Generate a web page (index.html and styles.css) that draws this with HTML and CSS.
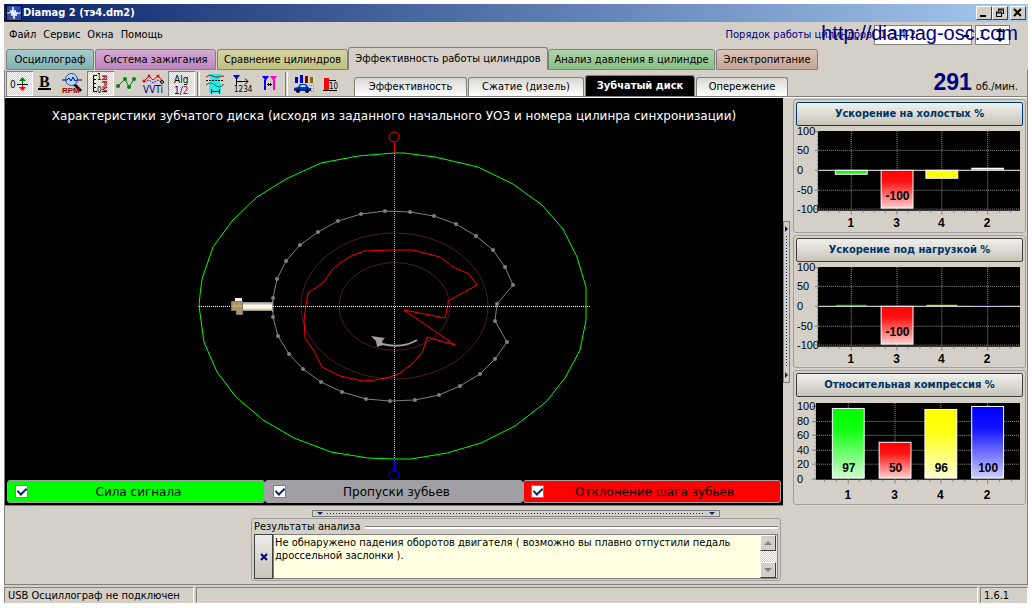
FILE: index.html
```html
<!DOCTYPE html>
<html lang="ru">
<head>
<meta charset="utf-8">
<title>Diamag 2 (тэ4.dm2)</title>
<link rel="stylesheet" href="styles.css">
</head>
<body>
<div class="window">
  <header class="titlebar">
    <svg class="app-icon" viewBox="0 0 16 16"><rect width="16" height="16" fill="#000"/><rect x="1" y="1" width="14" height="14" fill="#2a4ab0"/><path d="M1 8h3l1-3 1 6 1-9 1 12 1-9 1 6 1-4 1 2 1-1h2" stroke="#fff" fill="none"/></svg>
    <h1 class="title">Diamag 2 (тэ4.dm2)</h1>
    <button class="win-btn" aria-label="Свернуть"><svg viewBox="0 0 12 10"><path d="M2 8h6" stroke="#000" stroke-width="2"/></svg></button>
    <button class="win-btn" aria-label="Восстановить"><svg viewBox="0 0 12 10"><path d="M4 1h6M4 2h6M4.500 1v2M9.500 1v5M7 5.500h3M2 4h6M2 5h6M2.500 4v5M7.500 4v5M2 8.500h6" stroke="#000" fill="none"/></svg></button>
    <button class="win-btn win-close" aria-label="Закрыть"><svg viewBox="0 0 12 10"><path d="M2 1l7 7M9 1l-7 7" stroke="#000" stroke-width="2"/></svg></button>
  </header>

  <div class="menubar">
    <nav class="menu"><button>Файл</button><button>Сервис</button><button>Окна</button><button>Помощь</button></nav>
    <label class="order-label" for="order">Порядок работы цилиндров</label>
    <select class="order" id="order"><option>1-3-4-2</option></select>
    <span class="spin"><input class="spin-input" type="text" value="1" aria-label="Цилиндр синхронизации"><svg viewBox="0 0 10 18"><path d="M1 6l4-4 4 4zM1 12l4 4 4-4z"/></svg></span>
    <a class="site" href="#">http://diamag-osc.com</a>
  </div>

  <nav class="tabs">
    <button class="tab tab-teal">Осциллограф</button>
    <button class="tab tab-purple">Система зажигания</button>
    <button class="tab tab-olive">Сравнение цилиндров</button>
    <button class="tab tab-active">Эффективность работы цилиндров</button>
    <button class="tab tab-green">Анализ давления в цилиндре</button>
    <button class="tab tab-brown">Электропитание</button>
  </nav>

  <main class="page">
    <div class="toolbar">
      <div class="tools">
        <button class="tool pressed" aria-label="Ноль"><svg viewBox="6 71 27 25"><text class="ico-10" x="10" y="88">0</text><path d="M17 84.500h11" stroke="#000"/><path d="M22.500 80v4" stroke="#070"/><path d="M19 81l3.500-4 3.500 4z" fill="#080"/><path d="M19 87l3.500 4 3.500-4z" fill="#f00"/><path d="M22.500 85v3" stroke="#f00"/></svg></button>
        <button class="tool" aria-label="Жирный"><svg viewBox="33 71 27 25"><text class="ico-b" x="39" y="87">B</text><path d="M38 89h13" stroke="#000" stroke-width="2"/></svg></button>
        <button class="tool" aria-label="Обороты"><svg viewBox="60 71 27 25"><path d="M74 84l7 7" stroke="#111" stroke-width="3"/><circle cx="71.500" cy="79.500" r="6" fill="#aed8ff" stroke="#357"/><path d="M62 80h5l2-2 2 3 2-4 2 4 2-1h5" stroke="#008" fill="none"/><text class="ico-rpm" x="62" y="93">RPM</text></svg></button>
        <button class="tool pressed" aria-label="Шкала оборотов"><svg viewBox="87 71 27 25"><path d="M97 75.500h-3.500v16h3.500M94 79.500h2M94 83.500h2M94 87.500h2" stroke="#000" fill="none"/><text class="ico-8" x="97" y="80">1</text><text class="ico-8" x="97" y="93">0</text><text class="ico-rpm" transform="translate(102 75) rotate(90)" x="0" y="0">RPM</text></svg></button>
        <button class="tool" aria-label="График"><svg viewBox="114 71 27 25"><path d="M118 86l7-7 4 8 5-8" stroke="#080" fill="none"/><g fill="#080"><circle cx="118" cy="86" r="2"/><circle cx="125" cy="79" r="2"/><circle cx="129" cy="87" r="2"/><circle cx="134" cy="79" r="2"/></g></svg></button>
        <button class="tool" aria-label="VVTi"><svg viewBox="141 71 27 25"><path d="M144 81l5-5 4 4 5-4 4 4" stroke="#e00" fill="none"/><path d="M144 82l5-2 4 3 5-3 4 2" stroke="#22b" fill="none" stroke-dasharray="2 1"/><g fill="#f00"><circle cx="144" cy="81" r="1.500"/><circle cx="149" cy="76" r="1.500"/><circle cx="158" cy="76" r="1.500"/></g><circle cx="162" cy="82" r="1.500" fill="none" stroke="#000"/><text class="ico-vvt" x="143" y="93">VVTi</text></svg></button>
        <button class="tool pressed" aria-label="Алгоритм"><svg viewBox="168 71 27 25"><text class="ico-10" x="174" y="83">Alg</text><text class="ico-10 navy" x="174" y="94">1/<tspan fill="#f00">2</tspan></text></svg></button>
        <span class="sep"></span>
        <button class="tool" aria-label="Разрез"><svg viewBox="202 71 27 25"><path fill="#2ee" d="M209 74h12v2l-2 4 2 4v9h-12v-9l2-4-2-4z"/><path d="M206 77q4-3 7-1t5 1 6-1" stroke="#c00" fill="none"/><path d="M206 80.500h18" stroke="#000" stroke-dasharray="2 1"/><path d="M206 85q4-4 9 0t9-1" stroke="#073" fill="none"/><path d="M211 91.500h9M211.500 89v5M219.500 89v5" stroke="#008"/></svg></button>
        <button class="tool" aria-label="Метки 1234"><svg viewBox="229 71 27 25"><path d="M233 75h7l-3.500 5z" fill="#00f"/><path d="M236.500 78v8" stroke="#000"/><path d="M237 81.500h11M245 78.500l3 3-3 3" stroke="#000" fill="none"/><text class="ico-8" x="234" y="92">1234</text></svg></button>
        <button class="tool" aria-label="Интервал"><svg viewBox="256 71 27 25"><path d="M262 76h7l-3.500 5z" fill="#00f"/><path d="M265 80v10" stroke="#00f" stroke-width="2"/><path d="M270 76h7l-3.500 5z" fill="#f0c"/><path d="M274 80v10" stroke="#f0c" stroke-width="2"/><path d="M267 84.500h5M268.500 83v3M270.500 83v3" stroke="#000"/></svg></button>
        <span class="sep"></span>
        <button class="tool" aria-label="Машина"><svg viewBox="290 71 27 25"><path d="M295 77h3v6h-3z" fill="#00c"/><path d="M300 75h3v8h-3z" fill="#0000d0"/><path d="M305 76h3v7h-3z" fill="#800"/><path d="M310 77h3v6h-3z" fill="#770"/><path d="M294 91v-3l4-1 2-3h6l3 4h2v3z" fill="#0030c0"/><path d="M301 85h4l1 2h-6z" fill="#9ef"/><circle cx="298" cy="91" r="2" fill="#000"/><circle cx="307" cy="91" r="2" fill="#000"/><path d="M309 85.500h5M311 88.500h4M311 91.500h4" stroke="#888" stroke-dasharray="1 1"/></svg></button>
        <button class="tool" aria-label="Уровень"><svg viewBox="317 71 27 25"><path d="M324 78h5v12h-5z" fill="#f00"/><path d="M329 80.500h7M323 90.500h14" stroke="#000"/><text class="ico-8" x="329" y="89">10</text></svg></button>
      </div>
      <nav class="subtabs">
        <button class="subtab">Эффективность</button>
        <button class="subtab">Сжатие (дизель)</button>
        <button class="subtab subtab-active">Зубчатый диск</button>
        <button class="subtab">Опережение</button>
      </nav>
      <div class="rpm"><output class="rpm-value">291</output><span>об./мин.</span></div>
    </div>

    <div class="content">
      <section class="left">
        <div class="scope">
          <h2 class="scope-title">Характеристики зубчатого диска (исходя из заданного начального УОЗ и номера цилинра синхронизации)</h2>
          <svg class="disk" viewBox="5 128 778 352">
            <defs><linearGradient id="rod" x2="0" y2="1"><stop offset="0" stop-color="#888"/><stop offset=".4" stop-color="#fffff0"/><stop offset=".7" stop-color="#fff4d0"/><stop offset="1" stop-color="#888"/></linearGradient></defs>
            <g fill="none">
              <ellipse cx="394.500" cy="306" rx="93.500" ry="73" stroke="#4a2020"/>
              <ellipse cx="394.500" cy="306.500" rx="55.500" ry="44" stroke="#4a2020"/>
              <polygon stroke="#0f0" points="199,306 200,295 202,279 213,247 232,221 257,197 286,179 321,163 358,156 394,153 404,153 435,157 478,167 513,184 542,205 563,229 577,257 586,287 586,320 580,350 565,378 546,402 515,426 481,443 447,453 411,459 394,459 368,458 331,452 294,438 263,420 236,397 217,372 204,342"/>
              <polygon stroke="#808080" points="273,298 277,279 286,261 300,245 318,232 338,221 361,214 385,211 410,212 434,216 456,224 476,236 493,250 505,267 513,285 497,304 495,321 507,342 495,359 480,374 460,386 439,395 415,400 390,401 366,399 342,392 321,382 303,369 289,354 278,336 273,317"/>
              <path stroke="#808080" stroke-width="4" stroke-linecap="round" d="M273 298h0M277 279h0M286 261h0M300 245h0M318 232h0M338 221h0M361 214h0M385 211h0M410 212h0M434 216h0M456 224h0M476 236h0M493 250h0M505 267h0M513 285h0M497 304h0M495 321h0M507 342h0M495 359h0M480 374h0M460 386h0M439 395h0M415 400h0M390 401h0M366 399h0M342 392h0M321 382h0M303 369h0M289 354h0M278 336h0M273 317h0"/>
              <polygon stroke="#f00" points="306,305 308,293 323,283 332,270 340,263 353,255 365,251 390,250 413,250 440,257 453,267 469,274 477,285 448,301 448,305 445,318 404,310 455,345 427,337 423,351 413,363 400,373 390,377 375,380 363,381 340,376 322,367 314,351 305,338 304,320"/>
              <path stroke="#fff" stroke-dasharray="1 1" d="M199 306.500h392"/>
              <path stroke="#f00" d="M394.500 143v10"/>
              <path stroke="#0ff" stroke-dasharray="1 1" d="M394.500 153v153"/>
              <path stroke="#ff0" stroke-dasharray="1 1" d="M394.500 307v152"/>
              <path stroke="#00f" d="M394.500 459v11"/>
              <circle cx="394" cy="137" r="5" stroke="#f00"/>
              <circle cx="394" cy="475" r="5" stroke="#00f"/>
              <path stroke="#a0a0a0" stroke-width="2" d="M417 340q-15 9-35 4"/>
            </g>
            <path fill="#a0a0a0" d="M371 336l14 2-3 3 1 4-6 2-1-6z"/>
            <path fill="#fff" d="M235 298h7v4h-7z"/>
            <path fill="#ac9468" stroke="#807870" d="M231.500 301.500h11v13h-6v-4h-5z"/>
            <path fill="#c8a85c" d="M233 305h9v2h-9z"/>
            <path fill="url(#rod)" d="M243 302h29v9h-29z"/>
            <path stroke="#999" d="M272.500 301v11"/>
          </svg>
          <div class="legend">
            <label class="series series-green"><input type="checkbox" checked><span>Сила сигнала</span></label>
            <label class="series series-gray"><input type="checkbox" checked><span>Пропуски зубьев</span></label>
            <label class="series series-red"><input type="checkbox" checked><span>Отклонение шага зубьев</span></label>
          </div>
        </div>

        <div class="hsplit"><i class="arrow-down"></i><i class="dots"></i><i class="arrow-down"></i></div>

        <section class="results">
          <h2 class="results-title">Результаты анализа</h2>
          <div class="results-body">
            <button class="results-close" aria-label="Закрыть результаты"><svg viewBox="0 0 8 8"><path d="M1 1l6 6M7 1l-6 6" stroke="#000080" stroke-width="2"/></svg></button>
            <textarea class="results-text" aria-label="Результаты анализа" readonly>Не обнаружено падения оборотов двигателя ( возможно вы плавно отпустили педаль дроссельной заслонки ).</textarea>
            <div class="scrollbar"><button aria-label="Вверх"><svg viewBox="0 0 8 4"><path d="M0 4l4-4 4 4z"/></svg></button><button aria-label="Вниз"><svg viewBox="0 0 8 4"><path d="M0 0l4 4 4-4z"/></svg></button></div>
          </div>
        </section>
      </section>

      <div class="vsplit"><div class="vsplit-bar"><i class="arrow-right"></i><i class="dots"></i><i class="arrow-right"></i></div></div>

      <aside class="charts">
        <section class="card">
          <button class="card-title focused">Ускорение на холостых %</button>
          <svg class="chart" viewBox="796 127 228 103">
            <defs>
              <linearGradient id="g" x2="0" y2="1"><stop stop-color="#0f0"/><stop offset=".3" stop-color="#1f1"/><stop offset="1" stop-color="#d0ffd0"/></linearGradient>
              <linearGradient id="r" x2="0" y2="1"><stop stop-color="#f00"/><stop offset=".3" stop-color="#f11"/><stop offset="1" stop-color="#ffd0d0"/></linearGradient>
              <linearGradient id="y" x2="0" y2="1"><stop stop-color="#ff0"/><stop offset=".3" stop-color="#ff1"/><stop offset="1" stop-color="#ffffd0"/></linearGradient>
              <linearGradient id="b" x2="0" y2="1"><stop stop-color="#00f"/><stop offset=".3" stop-color="#11f"/><stop offset="1" stop-color="#d0d0ff"/></linearGradient>
              <g id="plot">
                <path d="M818 131h203v80h-203z"/>
                <path class="grid" d="M819 150.500h202M819 190.500h202M819 209.500h202M851.500 131v80M897.500 131v80M942.500 131v80M988.500 131v80"/>
                <path class="tick" d="M815 131.500h4M815 150.500h4M815 170.500h4M815 190.500h4M815 209.500h4M851.500 211v4M897.500 211v4M942.500 211v4M988.500 211v4"/>
                <path class="tick" stroke-dasharray="1 3" d="M817.500 132v78"/>
                <path class="tick" d="M828.500 211v2M839.500 211v2M863.500 211v2M874.500 211v2M885.500 211v2M908.500 211v2M920.500 211v2M931.500 211v2M954.500 211v2M965.500 211v2M977.500 211v2M1000.500 211v2M1011.500 211v2"/>
                <g class="axis"><text x="797" y="135">100</text><text x="797" y="154">50</text><text x="797" y="174">0</text><text x="797" y="194">-50</text><text x="797" y="213">-100</text></g>
                <g class="cat"><text x="851" y="227">1</text><text x="897" y="227">3</text><text x="942" y="227">4</text><text x="988" y="227">2</text></g>
                <path class="zero" d="M819 170.500h202"/>
                <rect class="bar" x="881.500" y="170.500" width="32" height="38" fill="url(#r)"/><text class="val" x="898" y="200">-100</text>
              </g>
            </defs>
            <use href="#plot"/>
            <rect class="bar" x="835.500" y="170.500" width="32" height="4" fill="#2e2"/>
            <rect class="bar" x="926.500" y="170.500" width="32" height="8" fill="#ff0"/>
            <path d="M972 168h33v2h-33z" fill="#fff"/>
          </svg>
        </section>
        <section class="card">
          <button class="card-title">Ускорение под нагрузкой %</button>
          <svg class="chart" viewBox="796 127 228 103">
            <use href="#plot"/>
            <path d="M836 169.500h31" stroke="#0f0"/><path d="M927 169.500h31" stroke="#ff0"/><path d="M973 169.500h31" stroke="#00f"/>
          </svg>
        </section>
        <section class="card">
          <button class="card-title">Относительная компрессия %</button>
          <svg class="chart" viewBox="796 398 228 104">
            <path d="M816 403h205v77h-205z"/>
            <path class="grid" d="M817 421.500h204M817 435.500h204M817 450.500h204M817 464.500h204M848.500 403v77M895.500 403v77M941.500 403v77M988.500 403v77"/>
            <path class="tick" d="M812 406.500h4M812 421.500h4M812 435.500h4M812 450.500h4M812 464.500h4M812 479.500h4M848.500 480v4M895.500 480v4M941.500 480v4M988.500 480v4"/>
            <path class="tick" stroke-dasharray="1 3" d="M815 406v73"/>
            <path class="tick" d="M824.500 480v2M836.500 480v2M859.500 480v2M871.500 480v2M883.500 480v2M906.500 480v2M918.500 480v2M930.500 480v2M953.500 480v2M965.500 480v2M977.500 480v2M1000.500 480v2M1012.500 480v2"/>
            <g class="axis"><text x="797" y="410">100</text><text x="797" y="425">80</text><text x="797" y="439">60</text><text x="797" y="454">40</text><text x="797" y="468">20</text><text x="797" y="483">0</text></g>
            <g class="bar"><rect x="832.500" y="408.500" width="32" height="70" fill="url(#g)"/><rect x="879.500" y="442.500" width="32" height="36" fill="url(#r)"/><rect x="925.500" y="409.500" width="32" height="69" fill="url(#y)"/><rect x="972.500" y="406.500" width="32" height="72" fill="url(#b)"/></g>
            <g class="val"><text x="849" y="472">97</text><text x="896" y="472">50</text><text x="942" y="472">96</text><text x="989" y="472">100</text></g>
            <g class="cat"><text x="848" y="499">1</text><text x="895" y="499">3</text><text x="941" y="499">4</text><text x="988" y="499">2</text></g>
          </svg>
        </section>
      </aside>
    </div>
  </main>

  <footer class="status"><span class="status-device">USB Осциллограф не подключен</span><span class="status-fill"></span><span class="status-version">1.6.1</span></footer>
</div>
</body>
</html>
```
FILE: styles.css
```css
* { box-sizing: border-box; }
body {
  margin: 0;
  padding: 4px 4px 5px;
  min-height: 100vh;
  display: flex;
  background: #fff;
  color: #000;
  font: 11px/14px "DejaVu Sans Condensed", "DejaVu Sans", sans-serif;
}
button, input, select, textarea { font: inherit; color: inherit; margin: 0; padding: 0; border-radius: 0; }
button { border: 0; background: none; white-space: nowrap; }
svg { display: block; }
h1, h2 { margin: 0; font: inherit; }

.window { flex: 1; min-width: 0; display: flex; flex-direction: column; background: #d4d0c8; }

.titlebar {
  display: flex; align-items: center; height: 18px; padding: 0 2px;
  background: linear-gradient(90deg, #0a246a, #a6caf0);
}
.app-icon { width: 16px; height: 16px; margin-right: 1px; }
.title { flex: 1; color: #fff; font-weight: bold; }
.win-btn {
  width: 16px; height: 14px; padding: 1px; background: #d4d0c8;
  border: 1px solid; border-color: #fff #404040 #404040 #fff;
}
.win-close { margin-left: 2px; }

.menubar { position: relative; display: flex; align-items: center; height: 25px; padding-right: 18px; }
.menu { flex: 1; display: flex; gap: 7px; padding-left: 5px; }
.order-label { color: #000080; margin-right: 2px; }
.order {
  width: 98px; height: 20px; padding-left: 5px; border: 1px solid #808080; appearance: none;
  background: linear-gradient(#000, #000) 89px 9px / 5px 2px no-repeat #fff;
}
.spin { display: flex; align-items: center; width: 35px; height: 20px; margin-left: 3px; border: 1px solid #808080; background: #fff; }
.spin-input { flex: 1; width: 10px; padding-left: 3px; border: 0; background: none; }
.spin svg { width: 10px; height: 18px; margin-right: 4px; }
.site {
  position: absolute; right: 10px; top: 0; color: #000080; text-decoration: none;
  font: 20px/22px "Liberation Sans", Arial, sans-serif;
}

.tabs { display: flex; align-items: flex-end; height: 23px; padding-left: 2px; gap: 1px; }
.tab {
  height: 21px; padding: 0; border: 1px solid #808080; border-radius: 3px 3px 0 0;
}
.tab-teal { width: 88px; background: linear-gradient(#a8cccc, #84b0b0); }
.tab-purple { width: 121px; background: linear-gradient(#d4acd4, #bc84bc); }
.tab-olive { width: 131px; background: linear-gradient(#d4d4a4, #c0c080); }
.tab-active { width: 200px; height: 23px; margin: 0 -1px; border-bottom: 0; background: #d4d0c8; }
.tab-green { width: 167px; background: linear-gradient(#b0d4ac, #88c084); }
.tab-brown { width: 102px; background: linear-gradient(#dcc4b8, #c4a494); }

.page { flex: 1; display: flex; flex-direction: column; border: 1px solid #808080; border-top: 0; }
.toolbar { display: flex; align-items: flex-end; height: 27px; padding: 0 9px 0 1px; border-bottom: 1px solid #808080; }
.tools { display: flex; align-items: center; }
.tool { width: 27px; height: 25px; }
.tool svg { width: 27px; height: 25px; }
.pressed { background: repeating-conic-gradient(#fff 0 25%, #d4d0c8 0 50%) 0 0 / 2px 2px; box-shadow: inset 1px 1px #808080, inset -1px -1px #fff; }
.sep { width: 3px; height: 24px; margin: 0 2px; border-left: 1px solid #808080; border-right: 1px solid #fff; }
.ico-10 { font: 10px "DejaVu Sans Condensed", sans-serif; }
.ico-8 { font: 8px "DejaVu Sans Condensed", sans-serif; }
.ico-b { font: bold 16px "Liberation Serif", serif; }
.ico-rpm { font: bold 8px "Liberation Sans", sans-serif; fill: #900; }
.ico-vvt { font: 10px "DejaVu Sans Condensed", sans-serif; fill: #008; }
.navy { fill: #008; }
.subtabs { flex: 1; display: flex; align-items: flex-end; gap: 1px; padding-left: 10px; }
.subtab {
  width: 113px; height: 19px; border: 1px solid #808080; border-bottom: 0;
  border-radius: 3px 3px 0 0; background: linear-gradient(#d8d8d4, #fff);
}
.subtab:nth-child(2) { width: 116px; }
.subtab:nth-child(4) { width: 92px; }
.subtab-active { width: 110px; height: 21px; background: #000; color: #fff; font-weight: bold; }
.rpm { display: flex; align-items: baseline; gap: 4px; padding-bottom: 2px; }
.rpm-value { color: #000080; font: bold 23px/22px "Liberation Sans", Arial, sans-serif; }

.content { flex: 1; display: grid; grid-template-columns: minmax(0, 1fr) 10px 234px; border-top: 1px solid #fff; }
.left { min-width: 0; display: flex; flex-direction: column; }
.scope { background: #000; padding-bottom: 2px; border-bottom: 1px solid #808080; }
.scope-title { padding: 11px 0 5px; color: #fff; text-align: center; white-space: nowrap; font: 12px/14px "DejaVu Sans", Verdana, sans-serif; }
.disk { width: 100%; }
.legend { display: grid; grid-template-columns: repeat(3, 1fr); padding: 0 2px; }
.series {
  display: flex; align-items: center; height: 23px; padding: 0 15px 0 7px; text-align: center;
  border: 1px solid #a0a0a0; border-radius: 3px; font: 12px/14px "DejaVu Sans", Verdana, sans-serif;
}
.series span { flex: 1; }
.series input {
  appearance: none; width: 13px; height: 13px; border: 1px solid #808080; background: #fff;
  display: grid; place-items: center;
}
.series input:checked::before { content: ""; width: 4px; height: 7px; margin-bottom: 2px; border: solid #0a246a; border-width: 0 2px 2px 0; transform: rotate(45deg); }
.series-green { background: #0f0; }
.series-gray { background: #a0a0a4; }
.series-red { background: #f00; }

.hsplit { display: flex; align-items: center; gap: 4px; height: 7px; margin: 4px 63px 1px 307px; padding: 0 4px; border: 1px solid #808080; }
.hsplit .dots { flex: 1; height: 1px; background: repeating-linear-gradient(90deg, #0a246a 0 1px, transparent 1px 3px); }
.arrow-down { border: 3px solid transparent; border-top-color: #0a246a; border-bottom: 0; }
.arrow-right { border: 3px solid transparent; border-left-color: #0a246a; border-right: 0; }

.results { margin: 0 2px 3px 246px; padding: 1px 2px; border: 1px solid #a0a0a0; border-radius: 3px; }
.results-title { display: flex; align-items: center; gap: 4px; height: 14px; }
.results-title::after { content: ""; flex: 1; height: 2px; background: #fff; border-top: 1px solid #808080; }
.results-body { display: flex; align-items: stretch; height: 45px; }
.results-close { width: 19px; display: grid; place-items: center; border: 1px solid #404040; background: linear-gradient(#ececec, #c8c4b8); }
.results-close svg { width: 8px; height: 8px; }
.results-text { flex: 1; height: 45px; padding: 1px; resize: none; border: 1px solid #808080; border-right: 0; background: #ffffe1; line-height: 13px; overflow: hidden; }
.scrollbar {
  display: flex; flex-direction: column; justify-content: space-between; width: 18px; padding-right: 1px;
  border: 1px solid #808080; border-left: 0;
  background: repeating-conic-gradient(#fff 0 25%, #d4d0c8 0 50%) 0 0 / 2px 2px;
}
.scrollbar button { display: grid; place-items: center; height: 16px; background: #d4d0c8; border: 1px solid; border-color: #fff #404040 #404040 #fff; }
.scrollbar svg { width: 8px; height: 4px; fill: #808080; }

.vsplit { padding: 123px 0 0; }
.vsplit-bar { display: flex; flex-direction: column; align-items: center; gap: 4px; width: 7px; height: 162px; padding: 4px 0; border: 1px solid #808080; }
.vsplit-bar .dots { flex: 1; width: 1px; background: repeating-linear-gradient(#0a246a 0 1px, transparent 1px 3px); }

.charts { display: flex; flex-direction: column; gap: 2px; padding: 1px 1px 0 0; }
.card { padding: 2px; border: 1px solid #a0a0a0; border-radius: 3px; }
.card-title {
  display: block; width: 100%; height: 24px; color: #003366; font-weight: bold;
  border: 1px solid #404040; border-radius: 2px; background: linear-gradient(#f0f0ee, #c8c4b8);
}
.focused { border-color: #003c74; }
.chart { width: 100%; margin-top: 1px; }
.grid { stroke: #909090; stroke-dasharray: 1 1; fill: none; }
.tick { stroke: #808080; fill: none; }
.zero { stroke: #fff; }
.bar { stroke: #fff; }
.axis { font: 11px "Liberation Sans", Arial, sans-serif; }
.cat { font: bold 12px "Liberation Sans", Arial, sans-serif; text-anchor: middle; }
.val { font: bold 12px "Liberation Sans", Arial, sans-serif; text-anchor: middle; stroke: none; }

.status { display: flex; gap: 2px; height: 18px; padding-top: 2px; }
.status span { padding: 1px 3px; border: 1px solid; border-color: #808080 #fff transparent #808080; }
.status-device { width: 190px; }
.status-fill { flex: 1; }
.status-version { width: 48px; }
```
